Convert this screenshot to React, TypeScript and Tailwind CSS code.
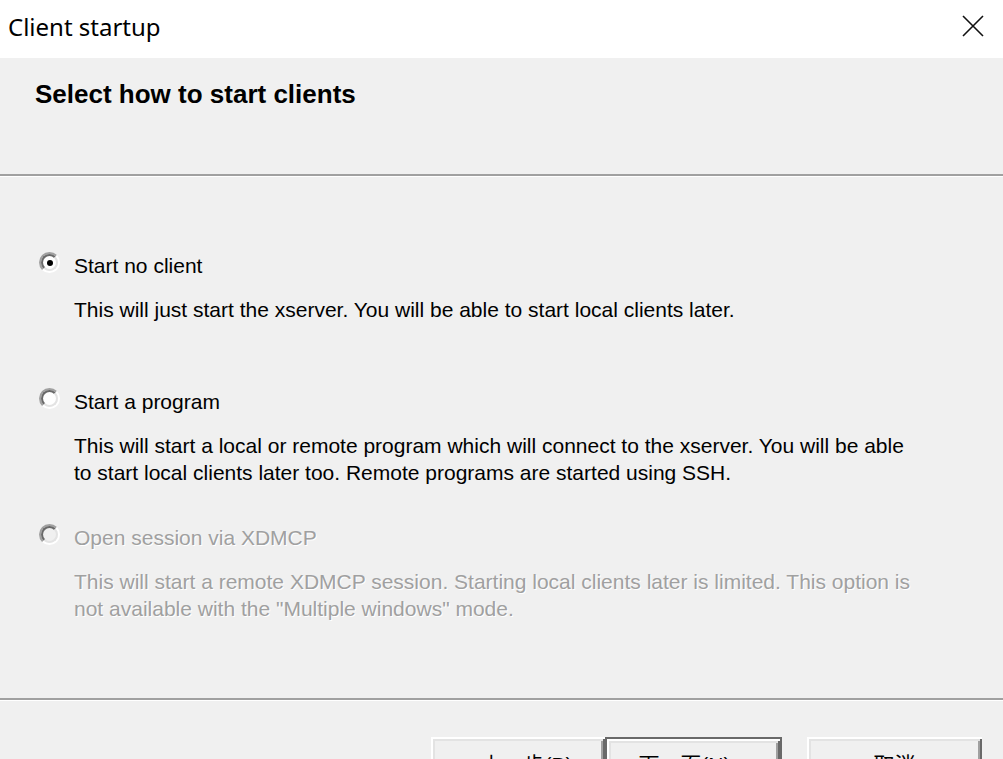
import React from "react";

const btnBevel =
  "shadow-[inset_2px_2px_0_#ffffff,inset_-2px_-2px_0_#696969,inset_4px_4px_0_#e3e3e3,inset_-4px_-4px_0_#a0a0a0]";

const Radio = ({ checked, disabled }: { checked?: boolean; disabled?: boolean }) => (
  <div className="w-[21px] h-[21px] rounded-full border-2 border-t-[#a0a0a0] border-l-[#a0a0a0] border-r-white border-b-white">
    <div
      className={`w-full h-full rounded-full border-2 border-t-[#696969] border-l-[#696969] border-r-[#e3e3e3] border-b-[#e3e3e3] flex items-center justify-center ${
        disabled ? "bg-[#f0f0f0]" : "bg-white"
      }`}
    >
      {checked && <div className="w-[6px] h-[6px] rounded-full bg-black" />}
    </div>
  </div>
);

const Option = ({
  label,
  lines,
  checked,
  disabled,
}: {
  label: string;
  lines: string[];
  checked?: boolean;
  disabled?: boolean;
}) => {
  const textColor = disabled
    ? "text-[#a0a0a0] [text-shadow:1px_1px_0_#ffffff]"
    : "text-black";
  return (
    <div className="h-[136px] flex flex-col">
      <div className="flex items-start h-[27px]">
        <div className="w-[74px] pl-[39px]">
          <Radio checked={checked} disabled={disabled} />
        </div>
        <span className={`leading-[27px] whitespace-nowrap ${textColor}`}>{label}</span>
      </div>
      <div className={`mt-[17px] pl-[74px] leading-[27px] whitespace-nowrap ${textColor}`}>
        {lines.map((l) => (
          <div key={l}>{l}</div>
        ))}
      </div>
    </div>
  );
};

export default function App() {
  return (
    <div
      className="w-[1003px] h-[759px] overflow-hidden bg-[#f0f0f0] flex flex-col text-[21px]"
      style={{ fontFamily: '"Liberation Sans", "Noto Sans CJK SC", sans-serif' }}
    >
      {/* title bar */}
      <div className="h-[58px] bg-white flex items-start justify-between shrink-0">
        <span
          className="pl-[8px] pt-[11px] text-[24px] leading-[32px] text-black"
          style={{ fontFamily: '"Noto Sans", sans-serif' }}
        >
          Client startup
        </span>
        <svg width="22" height="22" viewBox="0 0 22 22" className="mt-[15px] mr-[19px]">
          <path d="M1 1 L21 21 M21 1 L1 21" stroke="#111" strokeWidth="1.6" />
        </svg>
      </div>

      {/* header */}
      <div className="h-[116px] shrink-0 pl-[35px] pt-[21px]">
        <span className="font-bold text-[26px] leading-[30px] text-black">
          Select how to start clients
        </span>
      </div>
      <div className="h-[2px] bg-[#a0a0a0] shrink-0" />
      <div className="h-[1px] bg-white shrink-0" />

      {/* options */}
      <div className="h-[521px] shrink-0 pt-[75px] flex flex-col">
        <Option
          checked
          label="Start no client"
          lines={["This will just start the xserver. You will be able to start local clients later."]}
        />
        <Option
          label="Start a program"
          lines={[
            "This will start a local or remote program which will connect to the xserver. You will be able",
            "to start local clients later too. Remote programs are started using SSH.",
          ]}
        />
        <Option
          disabled
          label="Open session via XDMCP"
          lines={[
            "This will start a remote XDMCP session. Starting local clients later is limited. This option is",
            'not available with the "Multiple windows" mode.',
          ]}
        />
      </div>
      <div className="h-[2px] bg-[#a0a0a0] shrink-0" />
      <div className="h-[1px] bg-white shrink-0" />

      {/* buttons */}
      <div className="flex pt-[36px] pl-[431px] text-black">
        <button className={`w-[174px] h-[56px] bg-[#f0f0f0] ${btnBevel} flex items-center justify-center`}>
          &lt; 上一步(B)
        </button>
        <div className="w-[177px] h-[56px] border-2 border-[#696969]">
          <button className={`w-full h-full bg-[#f0f0f0] ${btnBevel} flex items-center justify-center`}>
            下一页(N) &gt;
          </button>
        </div>
        <button className={`ml-[25px] w-[175px] h-[56px] bg-[#f0f0f0] ${btnBevel} flex items-center justify-center`}>
          取消
        </button>
      </div>
    </div>
  );
}
